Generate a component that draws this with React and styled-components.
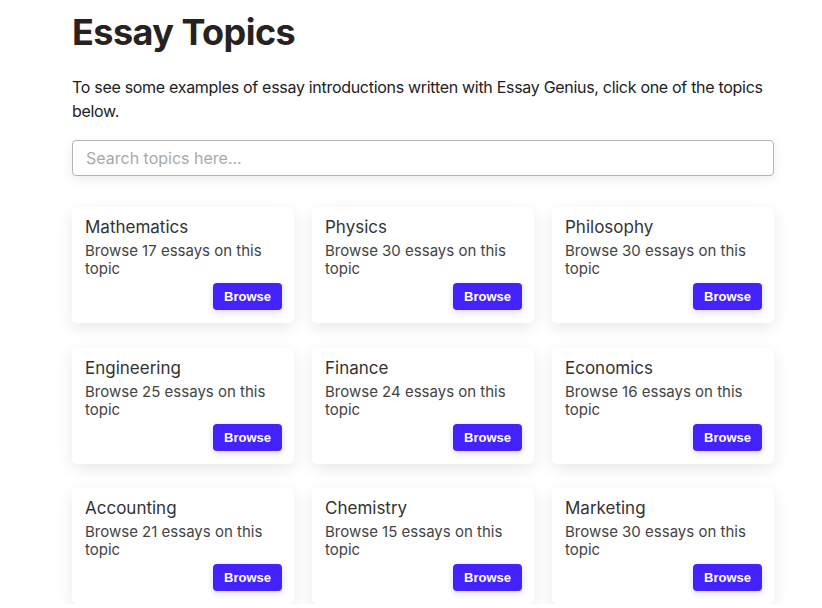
import React from 'react'
import styled, { createGlobalStyle } from 'styled-components'

const GlobalStyle = createGlobalStyle`
  html, body {
    margin: 0;
    padding: 0;
    background: #fff;
    font-family: Inter, "Noto Sans", sans-serif;
    color: #222;
  }
`;

const Page = styled.div`
  width: 702px;
  margin: 0 0 0 72px;
  padding-top: 10px;
`;

const Title = styled.h1`
  margin: 0;
  font-size: 36px;
  font-weight: 700;
  line-height: 44px;
  color: #27221f;
  letter-spacing: -0.55px;
`;

const Intro = styled.p`
  margin: 21px 0 17px;
  font-size: 16px;
  line-height: 24px;
  color: #222;
  letter-spacing: -0.3px;
`;

const Search = styled.input`
  display: block;
  box-sizing: border-box;
  width: 100%;
  height: 36px;
  padding: 0 13px;
  border: 1px solid #b4b4b4;
  border-radius: 4px;
  font-family: Inter, sans-serif;
  font-size: 16px;
  color: #222;
  box-shadow: 0 3px 12px rgba(0, 0, 0, 0.08);
  outline: none;
  &::placeholder {
    color: #a9a9a9;
  }
`;

const Grid = styled.div`
  display: grid;
  grid-template-columns: repeat(3, 222px);
  column-gap: 18px;
  row-gap: 24.5px;
  margin-top: 31px;
`;

const Card = styled.div`
  box-sizing: border-box;
  height: 116px;
  padding: 10px 12px 13px 13px;
  background: #fff;
  border-radius: 5px;
  box-shadow: 0 5px 16px rgba(0, 0, 0, 0.09);
  display: flex;
  flex-direction: column;
`;

const CardTitle = styled.div`
  font-size: 17px;
  line-height: 20px;
  color: #333;
  margin-bottom: 5px;
`;

const CardText = styled.div`
  font-size: 15px;
  line-height: 18px;
  color: #444;
`;

const Footer = styled.div`
  margin-top: auto;
  display: flex;
  justify-content: flex-end;
`;

const Button = styled.button`
  width: 69px;
  height: 27px;
  border: none;
  border-radius: 4px;
  background: #4322fb;
  color: #fff;
  font-family: "Liberation Sans", Arial, sans-serif;
  font-weight: 700;
  font-size: 13px;
  box-shadow: 0 2px 6px rgba(67, 34, 251, 0.2);
  cursor: pointer;
`;

const topics = [
  ['Mathematics', 17],
  ['Physics', 30],
  ['Philosophy', 30],
  ['Engineering', 25],
  ['Finance', 24],
  ['Economics', 16],
  ['Accounting', 21],
  ['Chemistry', 15],
  ['Marketing', 30],
];

export default function App() {
  return (
    <>
      <GlobalStyle />
      <Page>
        <Title>Essay Topics</Title>
        <Intro>
          To see some examples of essay introductions written with Essay Genius, click one of the topics below.
        </Intro>
        <Search placeholder="Search topics here..." />
        <Grid>
          {topics.map(([name, count]) => (
            <Card key={name}>
              <CardTitle>{name}</CardTitle>
              <CardText>Browse {count} essays on this topic</CardText>
              <Footer>
                <Button>Browse</Button>
              </Footer>
            </Card>
          ))}
        </Grid>
      </Page>
    </>
  )
}
